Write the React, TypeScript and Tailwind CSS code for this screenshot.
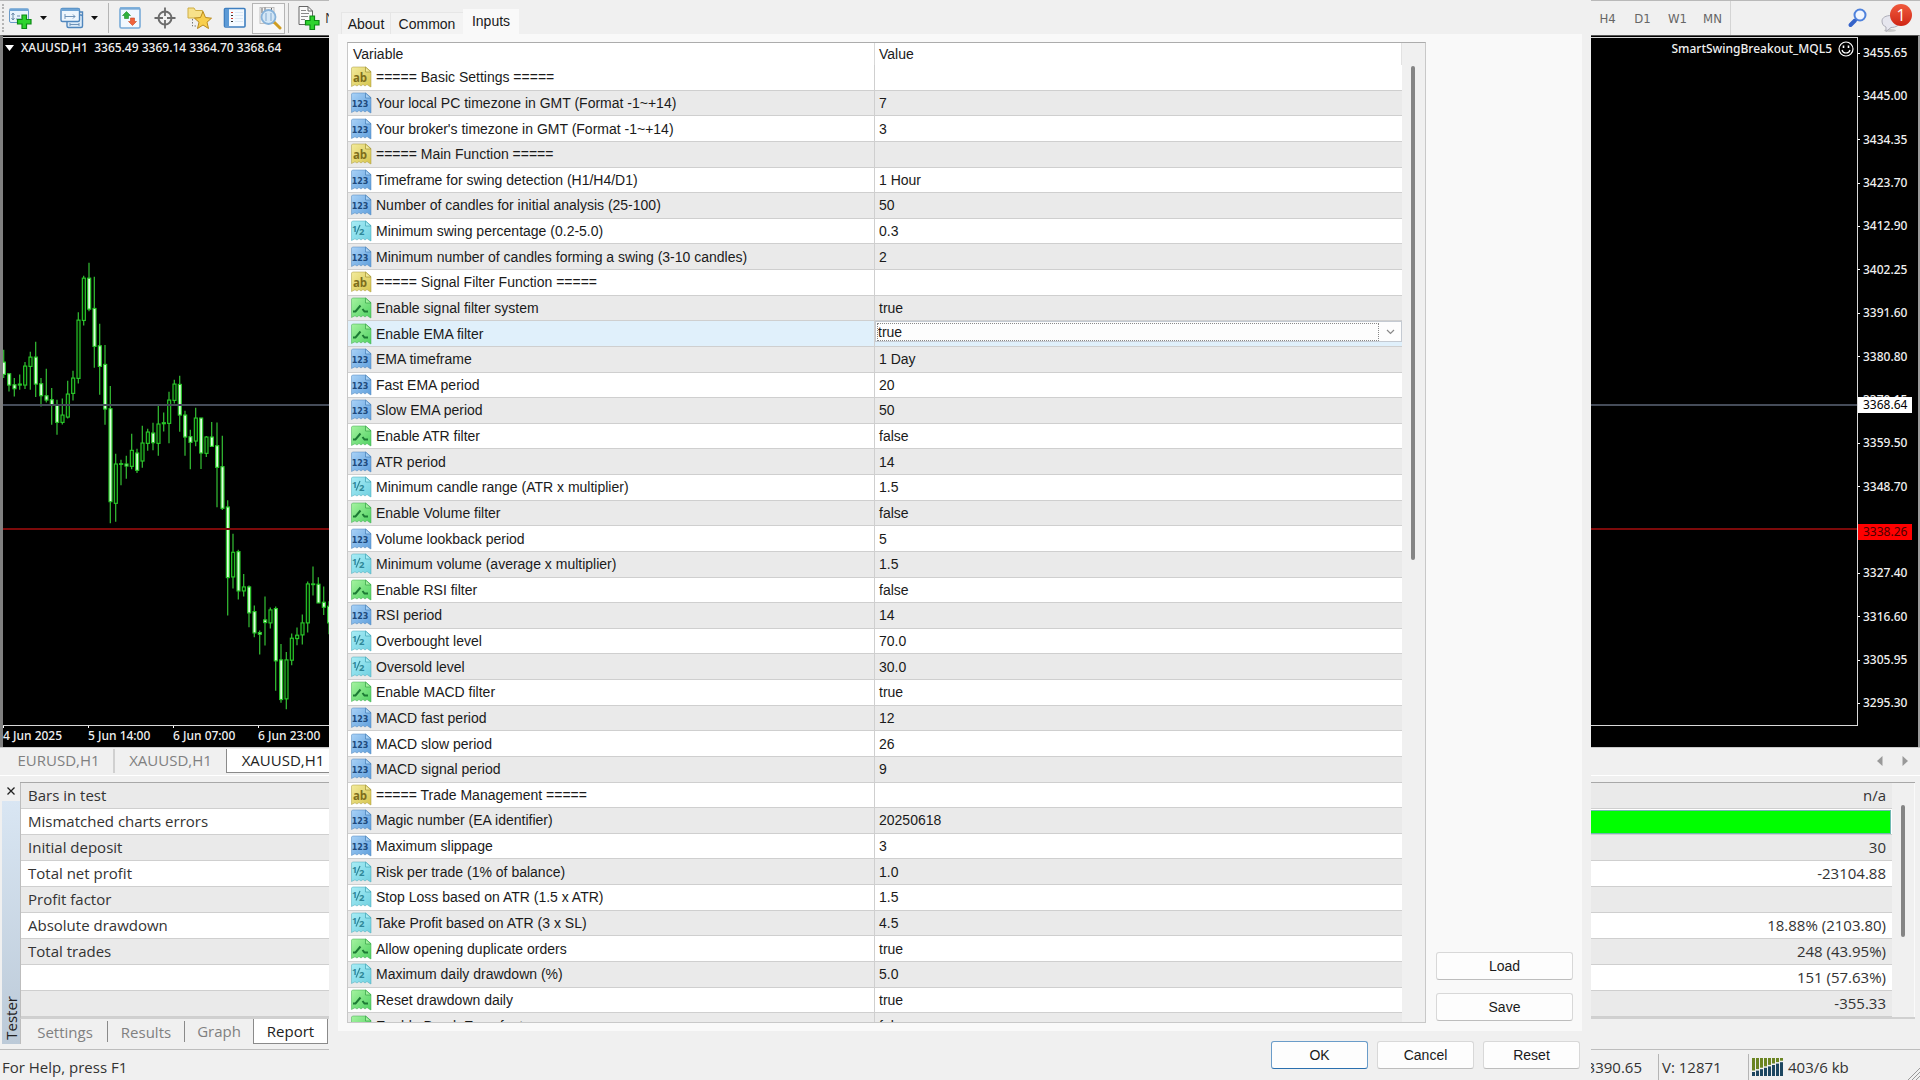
import React, { useState } from "react";
import { clsx } from "clsx";

type InputKind = "text" | "int" | "real" | "bool";

interface InputRow {
  kind: InputKind;
  name: string;
  value: string;
}

const inputRows: InputRow[] = [
  { kind: "text", name: "===== Basic Settings =====", value: "" },
  { kind: "int", name: "Your local PC timezone in GMT (Format -1~+14)", value: "7" },
  { kind: "int", name: "Your broker's timezone in GMT (Format -1~+14)", value: "3" },
  { kind: "text", name: "===== Main Function =====", value: "" },
  { kind: "int", name: "Timeframe for swing detection (H1/H4/D1)", value: "1 Hour" },
  { kind: "int", name: "Number of candles for initial analysis (25-100)", value: "50" },
  { kind: "real", name: "Minimum swing percentage (0.2-5.0)", value: "0.3" },
  { kind: "int", name: "Minimum number of candles forming a swing (3-10 candles)", value: "2" },
  { kind: "text", name: "===== Signal Filter Function =====", value: "" },
  { kind: "bool", name: "Enable signal filter system", value: "true" },
  { kind: "bool", name: "Enable EMA filter", value: "true" },
  { kind: "int", name: "EMA timeframe", value: "1 Day" },
  { kind: "int", name: "Fast EMA period", value: "20" },
  { kind: "int", name: "Slow EMA period", value: "50" },
  { kind: "bool", name: "Enable ATR filter", value: "false" },
  { kind: "int", name: "ATR period", value: "14" },
  { kind: "real", name: "Minimum candle range (ATR x multiplier)", value: "1.5" },
  { kind: "bool", name: "Enable Volume filter", value: "false" },
  { kind: "int", name: "Volume lookback period", value: "5" },
  { kind: "real", name: "Minimum volume (average x multiplier)", value: "1.5" },
  { kind: "bool", name: "Enable RSI filter", value: "false" },
  { kind: "int", name: "RSI period", value: "14" },
  { kind: "real", name: "Overbought level", value: "70.0" },
  { kind: "real", name: "Oversold level", value: "30.0" },
  { kind: "bool", name: "Enable MACD filter", value: "true" },
  { kind: "int", name: "MACD fast period", value: "12" },
  { kind: "int", name: "MACD slow period", value: "26" },
  { kind: "int", name: "MACD signal period", value: "9" },
  { kind: "text", name: "===== Trade Management =====", value: "" },
  { kind: "int", name: "Magic number (EA identifier)", value: "20250618" },
  { kind: "int", name: "Maximum slippage", value: "3" },
  { kind: "real", name: "Risk per trade (1% of balance)", value: "1.0" },
  { kind: "real", name: "Stop Loss based on ATR (1.5 x ATR)", value: "1.5" },
  { kind: "real", name: "Take Profit based on ATR (3 x SL)", value: "4.5" },
  { kind: "bool", name: "Allow opening duplicate orders", value: "true" },
  { kind: "real", name: "Maximum daily drawdown (%)", value: "5.0" },
  { kind: "bool", name: "Reset drawdown daily", value: "true" },
  { kind: "bool", name: "Enable Break Even feature", value: "false" },
];

const SELECTED_ROW = 10;

const testerRows = [
  ["Bars in test", "n/a"],
  ["Mismatched charts errors", "bar"],
  ["Initial deposit", "30"],
  ["Total net profit", "-23104.88"],
  ["Profit factor", ""],
  ["Absolute drawdown", "18.88% (2103.80)"],
  ["Total trades", "248 (43.95%)"],
  ["", "151 (57.63%)"],
  ["", "-355.33"],
];

const prices = [
  "3455.65", "3445.00", "3434.35", "3423.70", "3412.90", "3402.25", "3391.60", "3380.80",
  "3370.15", "3359.50", "3348.70", "3338.05", "3327.40", "3316.60", "3305.95", "3295.30",
];

const times = ["4 Jun 2025", "5 Jun 14:00", "6 Jun 07:00", "6 Jun 23:00"];

// high, low, body top, body bottom, 1 = rising (hollow)
const candles = [
  [330, 415, 367, 404, 0], [402, 455, 402, 436, 0], [415, 470, 435, 447, 0], [404, 450, 433, 436, 1],
  [367, 448, 379, 436, 1], [336, 450, 352, 380, 1], [306, 472, 352, 433, 0], [415, 500, 432, 468, 0],
  [387, 488, 468, 481, 0], [445, 555, 480, 497, 0], [480, 585, 495, 548, 0], [476, 554, 526, 548, 1],
  [423, 536, 463, 532, 1], [393, 482, 415, 461, 1], [217, 431, 241, 416, 1], [108, 257, 115, 242, 1],
  [69, 214, 115, 208, 0], [111, 384, 206, 320, 0], [252, 465, 318, 380, 0], [316, 555, 374, 508, 0],
  [439, 851, 507, 786, 0], [642, 846, 673, 791, 1], [660, 737, 672, 674, 1], [648, 717, 673, 679, 0],
  [582, 689, 632, 680, 1], [627, 700, 640, 692, 0], [558, 684, 610, 664, 1], [567, 633, 577, 611, 1],
  [549, 632, 580, 609, 0], [494, 648, 553, 611, 1], [518, 575, 549, 552, 1], [456, 611, 481, 551, 1],
  [420, 491, 433, 482, 1], [408, 576, 434, 526, 0], [513, 648, 526, 592, 0], [570, 689, 591, 608, 0],
  [504, 620, 535, 604, 1], [534, 688, 535, 640, 0], [589, 652, 592, 641, 1], [547, 622, 592, 620, 0],
  [548, 803, 618, 683, 0], [588, 811, 681, 806, 0], [782, 1128, 802, 1014, 0], [882, 1047, 938, 1012, 1],
  [930, 1080, 936, 1054, 0], [1003, 1071, 1042, 1054, 1], [1038, 1163, 1042, 1120, 0], [1098, 1193, 1116, 1180, 0],
  [1173, 1245, 1179, 1184, 0], [1071, 1218, 1141, 1149, 0], [1104, 1167, 1111, 1150, 1], [1101, 1354, 1107, 1264, 0],
  [1213, 1390, 1261, 1380, 0], [1237, 1409, 1261, 1378, 1], [1182, 1277, 1196, 1262, 1], [1164, 1217, 1187, 1197, 1],
  [1125, 1215, 1150, 1186, 1], [1026, 1179, 1033, 1150, 1], [981, 1068, 1033, 1035, 1], [1013, 1090, 1034, 1090, 0],
  [1041, 1126, 1088, 1103, 0], [1085, 1184, 1100, 1150, 0],
];

const kindColors = {
  text: { light: "#f3eb9c", dark: "#d6c44c", edge: "#a89a3e" },
  int: { light: "#a9d2f7", dark: "#5f9fdc", edge: "#4f86bb" },
  real: { light: "#a9edf6", dark: "#6fd0e0", edge: "#4aa9ba" },
  bool: { light: "#a5f3a0", dark: "#4fd162", edge: "#3fa94f" },
};

const IconGradients = () => (
  <svg width="0" height="0" className="absolute" aria-hidden="true">
    <defs>
      {(Object.keys(kindColors) as InputKind[]).map((kind) => (
        <linearGradient key={kind} id={`kind-${kind}`} x1="0" y1="0" x2="1" y2="1">
          <stop offset="0" stopColor={kindColors[kind].light} />
          <stop offset="1" stopColor={kindColors[kind].dark} />
        </linearGradient>
      ))}
    </defs>
  </svg>
);

const KindIcon = ({ kind }: { kind: InputKind }) => {
  const { light, edge } = kindColors[kind];
  return (
    <svg width="22" height="22" viewBox="0 0 22 22" className="shrink-0" aria-hidden="true">
      <path
        d="M2.5 1H15.5L21 5.5V21L19 20L17 18.5L15 20L13 18.5L11 20L9 18.5L7 20L5 18.8L1.5 20.5V2Z"
        fill={`url(#kind-${kind})`}
        stroke={edge}
        strokeOpacity="0.5"
      />
      <path d="M15.5 1V6H21Z" fill={light} stroke={edge} strokeWidth="0.8" />
      {kind === "int" && (
        <text x="10" y="15" fontSize="8" fontWeight="700" fontFamily="DejaVu Sans, sans-serif" textAnchor="middle" fill="#1d4a7c">123</text>
      )}
      {kind === "text" && (
        <text x="10" y="15.5" fontSize="11.5" fontWeight="700" fontFamily="Open Sans, sans-serif" textAnchor="middle" fill="#7d6d1c">ab</text>
      )}
      {kind === "real" && (
        <g fill="#2f8798" fontWeight="700" fontFamily="Open Sans, sans-serif">
          <text x="2" y="12" fontSize="9">1</text>
          <text x="9" y="15" fontSize="9.5">2</text>
          <path d="M6 14.5L10 5" stroke="#2f8798" strokeWidth="1.2" />
        </g>
      )}
      {kind === "bool" && (
        <path d="M3 14.5H5.5L10.5 8.5M12.5 12L14.5 14.5H18" fill="none" stroke="#1c7a34" strokeWidth="2" />
      )}
    </svg>
  );
};

const PlusMark = () => (
  <path d="M14 9H18.5V13.5H23V18H18.5V22.5H14V18H9.5V13.5H14Z" fill="#2ed32e" stroke="#0d8a14" strokeWidth="1.2" />
);

const NewChartIcon = () => (
  <svg width="26" height="24" viewBox="0 0 26 24" aria-hidden="true">
    <rect x="1.5" y="3" width="19" height="13.5" rx="1.5" fill="#e9f3fc" stroke="#6b9bc9" />
    <rect x="1.5" y="2.5" width="19" height="2.5" fill="#6fa5d6" />
    <path d="M5 14V7M3.5 9L5 7L6.5 9M3.5 12L5 14L6.5 12M8 13H13M9 10H12" fill="none" stroke="#6a8aa8" />
    <PlusMark />
  </svg>
);

const WindowsIcon = () => (
  <svg width="26" height="24" viewBox="0 0 26 24" aria-hidden="true">
    <rect x="8" y="9" width="15.5" height="12.5" rx="1.5" fill="#dcebf8" stroke="#4f86bd" strokeWidth="1.4" />
    <path d="M20 6H23.5V10" fill="none" stroke="#4f86bd" strokeWidth="1.4" />
    <path d="M11 18.5H20M11 17V20M20 17V20" stroke="#6f93b8" />
    <rect x="2" y="2.5" width="18.5" height="13" rx="1.5" fill="#eef6fd" stroke="#4f86bd" strokeWidth="1.4" />
    <rect x="2" y="2.5" width="18.5" height="2.5" fill="#6fa5d6" />
    <path d="M6 10.5H16M6 8V13M14 8.5L16 10.5L14 12.5" fill="none" stroke="#6f93b8" />
  </svg>
);

// green arrow points up on the left, orange one down on the right
const MarketWatchIcon = () => (
  <svg width="24" height="24" viewBox="0 0 24 24" aria-hidden="true">
    <rect x="2" y="2" width="20" height="20" rx="1.5" fill="#f1f8fe" stroke="#78abd8" strokeWidth="1.6" />
    <path d="M2 2.5H22" stroke="#78abd8" strokeWidth="2.4" />
    <path d="M8.5 5.5L12.5 9.5H10.5V12.5H6.5V9.5H4.5Z" fill="#2fb13b" stroke="#1c8a28" strokeWidth="0.6" />
    <path d="M14.5 19.5L10.5 15.5H12.5V12H16.5V15.5H18.5Z" fill="#f0623a" stroke="#c9441f" strokeWidth="0.6" />
  </svg>
);

const CrosshairIcon = () => (
  <svg width="24" height="24" viewBox="0 0 24 24" fill="none" stroke="#6b6b6b" aria-hidden="true">
    <circle cx="12" cy="12" r="6.5" strokeWidth="2" />
    <path d="M12 1.5V10M12 14V22.5M1.5 12H10M14 12H22.5" strokeWidth="1.8" />
  </svg>
);

const FavoritesIcon = () => (
  <svg width="26" height="24" viewBox="0 0 26 24" aria-hidden="true">
    <path d="M1 2H7L8.5 4.5H15.5V12H1Z" fill="#f7e18a" stroke="#cfae45" />
    <path d="M5.5 13V20H10" fill="none" stroke="#777" strokeDasharray="1.5 1.5" />
    <path d="M16 5.5L18.5 11.5L24.5 12.2L20 16.2L21.5 22.5L16 19L10.5 22.5L12 16.2L7.5 12.2L13.5 11.5Z" fill="#f8cf4e" stroke="#b98a1e" />
  </svg>
);

const TerminalIcon = () => (
  <svg width="24" height="24" viewBox="0 0 24 24" aria-hidden="true">
    <rect x="1.5" y="2.5" width="20.5" height="18.5" rx="1" fill="#f5faff" stroke="#3f7fc0" strokeWidth="1.6" />
    <rect x="2" y="3" width="4" height="17.5" fill="#5c9ad6" />
    <path d="M8 6.5H10M8 12.5H10" stroke="#d43c2c" />
    <path d="M8 9.5H10M8 15.5H10" stroke="#333" />
    <path d="M12 6.5H20M12 9.5H20M12 12.5H20M12 15.5H20" stroke="#dce9f5" />
  </svg>
);

const TesterIcon = () => (
  <svg width="26" height="26" viewBox="0 0 26 26" aria-hidden="true">
    <rect x="4" y="2.5" width="14" height="16" fill="#f2f2f2" stroke="#b5b5b5" strokeWidth="0.8" />
    <path d="M6 3V8M9 2.5V7M15.5 3V7" stroke="#666" />
    <path d="M18 17L24 23" stroke="#cf9d22" strokeWidth="3" strokeLinecap="round" />
    <circle cx="12.5" cy="12" r="7" fill="#cfe5f7" fillOpacity="0.85" stroke="#86b2da" strokeWidth="1.8" />
    <path d="M10 8V16M15 8V16" stroke="#9dbfdd" strokeWidth="1.5" />
  </svg>
);

const NewOrderIcon = () => (
  <svg width="24" height="26" viewBox="0 0 24 26" aria-hidden="true">
    <path d="M2 1.5H11L15.5 6V19.5H2Z" fill="#fafafa" stroke="#666" />
    <path d="M11 1.5V6H15.5" fill="none" stroke="#666" />
    <path d="M4 5.5H9M4 8.5H12M4 11.5H11M4 14.5H8" stroke="#888" />
    <g transform="translate(-1 2)"><PlusMark /></g>
  </svg>
);

const Caret = () => (
  <svg width="7" height="4" viewBox="0 0 7 4" aria-hidden="true">
    <path d="M0 0H7L3.5 4Z" fill="#111" />
  </svg>
);

const Toolbar = () => (
  <header className="flex h-[35px] shrink-0 items-center justify-between border-t border-[#b9b9b9] bg-[#f0f0f0]">
    <div className="flex h-full items-center">
      <span className="ml-0.5 h-7 w-1.5 border-l-2 border-dotted border-[#b5b5b5]" />
      <button aria-label="New chart" className="flex w-[26px] justify-center"><NewChartIcon /></button>
      <button aria-label="New chart menu" className="flex h-full w-[19px] items-center justify-center"><Caret /></button>
      <button aria-label="Profiles" className="ml-1.5 flex w-[26px] justify-center"><WindowsIcon /></button>
      <button aria-label="Profiles menu" className="flex h-full w-[19px] items-center justify-center"><Caret /></button>
      <span className="ml-1 mr-[3px] h-[30px] border-l border-[#b5b5b5]" />
      <button aria-label="Market watch" className="flex w-[35px] justify-center"><MarketWatchIcon /></button>
      <button aria-label="Crosshair" className="flex w-[35px] justify-center"><CrosshairIcon /></button>
      <button aria-label="Navigator" className="flex w-[35px] justify-center"><FavoritesIcon /></button>
      <button aria-label="Terminal" className="flex w-[35px] justify-center"><TerminalIcon /></button>
      <button aria-label="Strategy tester" className="flex h-[31px] w-[33px] items-center justify-center border border-[#b5b5b5] bg-[#f7f7f7]"><TesterIcon /></button>
      <span className="ml-[3px] mr-2 h-[30px] border-l border-[#b5b5b5]" />
      <button className="flex items-center gap-1 whitespace-nowrap text-sm text-[#333]">
        <NewOrderIcon />
        New Order
      </button>
    </div>
    <div className="flex h-full items-center">
      <div className="flex h-full items-center border-r border-[#d4d4d4] pt-0.5 font-['DejaVu_Sans_Condensed','Noto_Sans',sans-serif] text-[13px] text-[#666]">
        {["H4", "D1", "W1", "MN"].map((tf) => (
          <button key={tf} className="w-[35px] text-center">{tf}</button>
        ))}
      </div>
      <button aria-label="Search" className="ml-[115px] flex w-6 justify-center">
        <svg width="22" height="22" viewBox="0 0 22 22" fill="none" aria-hidden="true">
          <path d="M8 13.5L3.5 18" stroke="#3563c9" strokeWidth="4" strokeLinecap="round" />
          <circle cx="13" cy="8" r="5.5" fill="#f1f6ff" stroke="#4f82dc" strokeWidth="2" />
        </svg>
      </button>
      <button aria-label="Messages" className="relative ml-2.5 mr-2 h-full w-8">
        <svg width="32" height="34" viewBox="0 0 32 34" aria-hidden="true">
          <ellipse cx="10" cy="29.5" rx="6" ry="1.5" fill="#ccc" />
          <path d="M2 20C2 16.5 6 14.5 11 14.5S20 17 20 20.5S16 26.5 11 26.5L6 30.5V26C3.5 25 2 23 2 20Z" fill="#e6e6ee" stroke="#adadb8" />
        </svg>
        <span className="absolute right-0 top-[3px] flex size-[22px] items-center justify-center rounded-full bg-linear-to-b from-[#f0593d] to-[#cf2312] font-['Open_Sans',sans-serif] text-base text-white">1</span>
      </button>
    </div>
  </header>
);

const Chart = () => (
  <section className="flex min-h-0 flex-1 border-l-[3px] border-r-2 border-t border-l-[#808080] border-r-[#9a9a9a] border-t-[#555] bg-black pt-px font-['Noto_Sans',sans-serif] text-xs font-medium text-[#f0f0f0]">
    <div className="flex min-w-0 flex-1 flex-col">
      <div className="relative flex-1 border-y border-r border-[#d8d8d8]">
        <svg
          className="absolute left-0 top-0 h-full"
          width="327"
          viewBox="9 -606 981 2061"
          preserveAspectRatio="none"
          role="img"
          aria-label="XAUUSD H1 candles"
        >
          {candles.map(([high, low, top, bottom, rising], i) => {
            const x = 11 + i * 16;
            return (
              <g key={i}>
                <path d={`M${x} ${high}V${low}`} stroke="#2fae2f" strokeWidth="4" />
                <rect
                  x={x - 4}
                  y={top}
                  width="9"
                  height={Math.max(bottom - top, 2)}
                  fill={rising ? "#001a00" : "#dcffdc"}
                  stroke="#28c828"
                  strokeWidth="3.5"
                />
              </g>
            );
          })}
        </svg>
        <div className="absolute inset-x-0 top-[366px] h-0.5 bg-[#454c59]" />
        <div className="absolute inset-x-0 top-[490px] h-0.5 bg-[#7c0a0a]" />
        <div className="flex items-center justify-between pl-0.5 pr-[3px] pt-px">
          <div className="flex items-center gap-[7px]">
            <svg width="9" height="6" viewBox="0 0 9 6" aria-hidden="true">
              <path d="M0 0H9L4.5 6Z" fill="#fff" />
            </svg>
            <span className="whitespace-pre">XAUUSD,H1  3365.49 3369.14 3364.70 3368.64</span>
          </div>
          <div className="flex items-center gap-1.5 pt-0.5">
            <span>SmartSwingBreakout_MQL5</span>
            <svg width="16" height="16" viewBox="0 0 16 16" fill="none" stroke="#fff" aria-hidden="true">
              <circle cx="8" cy="8" r="7" strokeWidth="1.2" />
              <path d="M4 9C5 13 11 13 12 9" strokeWidth="1.2" />
              <path d="M5.5 4.5V7M10.5 4.5V7" strokeWidth="1.6" />
            </svg>
          </div>
        </div>
      </div>
      <div className="flex h-[21px] shrink-0">
        {times.map((t) => (
          <div key={t} className="w-[85px] whitespace-nowrap">
            <div className="h-0.5 w-px bg-white" />
            <div className="leading-4">{t}</div>
          </div>
        ))}
      </div>
    </div>
    <div className="relative flex w-[60px] shrink-0 flex-col justify-between pb-[35px] pt-2">
      {prices.map((p) => (
        <div key={p} className="flex items-center gap-[3px] leading-4">
          <span className="h-px w-0.5 bg-white" />
          {p}
        </div>
      ))}
      <div className="absolute left-0 top-[360px] w-[54px] bg-white pl-[5px] leading-4 font-normal text-black">3368.64</div>
      <div className="absolute left-0 top-[487px] w-[54px] bg-[#ff0000] pl-[5px] leading-4 font-normal text-[#4a0000]">3338.26</div>
    </div>
  </section>
);

const ChartTabs = () => (
  <nav className="flex h-[29px] shrink-0 items-stretch justify-between border-b border-b-white border-t border-t-[#c9c9c9] pb-0.5 pt-px text-[15px] text-[#808080]">
    <div className="flex">
      <button className="w-[115px] border-r-2 border-[#d0d0d0] pl-1">EURUSD,H1</button>
      <button className="w-28 border-r border-[#8a8a8a]">XAUUSD,H1</button>
      <button className="w-28 border-b border-[#8a8a8a] bg-white text-[#222]">XAUUSD,H1</button>
    </div>
    <div className="flex items-center gap-[19px] pr-3">
      <button aria-label="Scroll tabs left">
        <svg width="6" height="10" viewBox="0 0 6 10"><path d="M5.5 0V10L0 5Z" fill="#999" /></svg>
      </button>
      <button aria-label="Scroll tabs right">
        <svg width="6" height="10" viewBox="0 0 6 10"><path d="M0.5 0V10L6 5Z" fill="#999" /></svg>
      </button>
    </div>
  </nav>
);

const Tester = () => (
  <section className="mt-1.5 flex shrink-0 pb-[5px] pl-0.5 pr-[5px] text-[15px] text-[#333]">
    <div className="flex w-[18px] flex-col items-center">
      <button aria-label="Close tester" className="flex h-[19px] items-center justify-center">
        <svg width="8" height="8" viewBox="0 0 8 8" stroke="#222" strokeWidth="1.3"><path d="M0.5 0.5L7.5 7.5M7.5 0.5L0.5 7.5" /></svg>
      </button>
      <div className="flex w-full flex-1 items-end justify-center bg-linear-to-b from-[#d9e6f3] to-[#bccad8] pb-1">
        <span className="rotate-180 text-[15px] leading-4 text-[#222] [writing-mode:vertical-rl]">Tester</span>
      </div>
    </div>
    <div className="flex min-w-0 flex-1 flex-col border-t border-[#a8a8a8]">
      <div className="flex border-b-2 border-b-[#d0d0d0] border-l border-l-[#bdbdbd]">
        <table className="flex-1 border-collapse">
          <tbody className="table w-full">
            {testerRows.map(([label, value], i) => (
              <tr key={i} className={clsx("h-[26px] border-b border-[#cfcfcf]", i % 2 ? "bg-white" : "bg-[#eaeaea]")}>
                <td className="w-1/2 p-0 pl-[7px] leading-[25px]">{label}</td>
                <td className="p-0 text-right leading-[25px]">
                  {value === "bar" ? (
                    <div className="mr-px h-6 border border-[#6fb8b0] bg-[#00ff00]" />
                  ) : (
                    <span className="pr-1.5">{value}</span>
                  )}
                </td>
              </tr>
            ))}
          </tbody>
        </table>
        <div className="flex w-[23px] justify-center border-r border-[#fafafa] pt-[22px]">
          <div className="h-[132px] w-1 rounded-full bg-[#858585]" />
        </div>
      </div>
      <div className="flex h-[25px] border-l border-[#bdbdbd] text-[#808080]">
        <button className="my-0.5 w-[87px] border-r border-[#8a8a8a] pl-0.5">Settings</button>
        <button className="my-0.5 w-[77px] border-r border-[#8a8a8a]">Results</button>
        <button className="w-[68px]">Graph</button>
        <button className="w-[75px] border-x border-b border-[#8a8a8a] bg-white text-[#222]">Report</button>
      </div>
    </div>
  </section>
);

const StatusBar = () => (
  <footer className="flex h-[31px] shrink-0 items-center justify-between border-t border-[#bdbdbd] text-[15px] text-[#333]">
    <span className="pl-0.5 pt-1">For Help, press F1</span>
    <div className="flex h-full pt-1">
      <span className="flex items-center border-r border-[#b5b5b5] pr-4">C: 3390.65</span>
      <span className="flex w-[90px] items-center border-r border-[#b5b5b5] pl-[3px]">V: 12871</span>
      <span className="flex w-[158px] items-center gap-[5px] pl-[3px]">
        <svg width="31" height="18" viewBox="0 0 31 18" aria-hidden="true">
          {[0, 1, 2, 3, 4, 5, 6, 7].map((i) => (
            <g key={i}>
              <rect x={i * 4} y="0" width="3" height={12.5 - i * 1.4} fill="#6b8522" />
              <rect x={i * 4} y={14 - i * 1.4} width="3" height={4 + i * 1.4} fill="#1d4660" />
            </g>
          ))}
        </svg>
        403/6 kb
      </span>
      <svg width="13" height="13" viewBox="0 0 13 13" stroke="#999" className="self-end" aria-hidden="true">
        <path d="M1 13L13 1M5 13L13 5M9 13L13 9" />
      </svg>
    </div>
  </footer>
);

const dialogButton =
  "h-7 rounded-[3px] border border-[#d8d8d8] border-b-[#bdbdbd] bg-[#fdfdfd] text-center";

const InputsTable = () => {
  const [emaFilter, setEmaFilter] = useState("true");

  return (
    <div className="flex min-w-0 flex-1 overflow-hidden border border-[#c8c8c8] border-t-[#acacac] bg-[#f0f0f0]">
      <div className="min-w-0 flex-1 overflow-hidden">
        {/* last row runs past the bottom edge of the list */}
        <table className="h-[calc(100%+17px)] w-full table-fixed border-separate border-spacing-0 bg-white">
          <thead>
            <tr className="h-[22px]">
              <th className="w-1/2 border-r border-[#d8d8d8] p-0 pl-[5px] text-left font-normal leading-5">Variable</th>
              <th className="border-r border-[#e2e2e2] p-0 pl-1 text-left font-normal leading-5">Value</th>
            </tr>
          </thead>
          <tbody>
            {inputRows.map((row, i) => {
              const selected = i === SELECTED_ROW;
              return (
                <tr key={row.name} className={selected ? "bg-[#e0f0fb]" : i % 2 ? "bg-[#eaeaea]" : "bg-white"}>
                  <td className="border-b border-r border-[#cfcfcf] p-0 pl-0.5">
                    <div className="flex items-center gap-1">
                      <KindIcon kind={row.kind} />
                      <span className="whitespace-nowrap leading-5" id={`input-${i}`}>{row.name}</span>
                    </div>
                  </td>
                  <td className={clsx("border-b border-[#cfcfcf] p-0", selected ? "align-top" : "pl-1 leading-5")}>
                    {selected ? (
                      <div className="flex h-[21px] items-center border border-[#c4cad2] bg-[#fdfdfd] pl-px">
                        <select
                          aria-labelledby={`input-${i}`}
                          value={emaFilter}
                          onChange={(e) => setEmaFilter(e.target.value)}
                          className="h-[18px] flex-1 appearance-none border border-dotted border-[#888] bg-transparent leading-4 outline-none"
                        >
                          <option>true</option>
                          <option>false</option>
                        </select>
                        <svg width="22" height="8" viewBox="0 0 22 8" fill="none" stroke="#888" strokeWidth="1.2" aria-hidden="true">
                          <path d="M8 2L11.5 5.5L15 2" />
                        </svg>
                      </div>
                    ) : (
                      row.value
                    )}
                  </td>
                </tr>
              );
            })}
          </tbody>
        </table>
      </div>
      <div className="w-[23px] pl-[9px] pt-[23px]">
        <div className="h-[494px] w-1 rounded-full bg-[#858585]" />
      </div>
    </div>
  );
};

const InputsDialog = () => (
  <div
    role="dialog"
    aria-label="Expert inputs"
    className="absolute inset-y-0 left-[329px] right-[329px] flex flex-col bg-[#f0f0f0] font-['Liberation_Sans',Arial,sans-serif] text-sm text-[#1a1a1a]"
  >
    <div role="tablist" className="flex h-[34px] shrink-0 items-end pl-3">
      <button role="tab" className="h-[22px] w-[50px] border-x border-t border-[#e6e6e6] bg-[#f3f3f3]">About</button>
      <button role="tab" className="h-[22px] w-[72px] border-t border-[#e6e6e6] bg-[#f3f3f3]">Common</button>
      <button role="tab" aria-selected="true" className="h-[25px] w-[56px] bg-[#f9f9f9] pb-0.5">Inputs</button>
    </div>
    <div className="mx-[9px] flex min-h-0 flex-1 gap-2.5 bg-[#f9f9f9] px-[9px] py-2">
      <InputsTable />
      <div className="flex w-[137px] shrink-0 flex-col justify-end gap-[13px] pb-0.5">
        <button className={dialogButton}>Load</button>
        <button className={dialogButton}>Save</button>
      </div>
    </div>
    <div className="flex h-[49px] shrink-0 items-start justify-end gap-[9px] pr-[11px] pt-2.5">
      <button className="h-7 w-[97px] rounded-[3px] border border-[#6a9cc9] border-b-[#2a6fae] bg-[#fdfdfd] text-center">OK</button>
      <button className={clsx(dialogButton, "w-[97px]")}>Cancel</button>
      <button className={clsx(dialogButton, "w-[97px]")}>Reset</button>
    </div>
  </div>
);

export default function App() {
  return (
    <div className="relative flex h-screen flex-col overflow-hidden bg-[#f0f0f0] font-['Open_Sans','Noto_Sans',sans-serif]">
      <IconGradients />
      <Toolbar />
      <Chart />
      <ChartTabs />
      <Tester />
      <StatusBar />
      <InputsDialog />
    </div>
  );
}
